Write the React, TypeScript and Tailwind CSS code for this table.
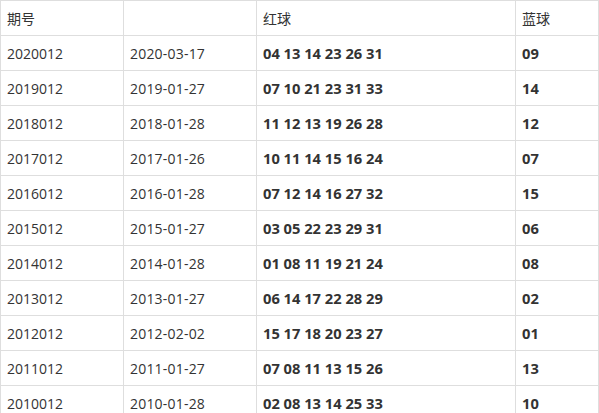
import React from "react";

const rows: [string, string, string, string][] = [
  ["2020012", "2020-03-17", "04 13 14 23 26 31", "09"],
  ["2019012", "2019-01-27", "07 10 21 23 31 33", "14"],
  ["2018012", "2018-01-28", "11 12 13 19 26 28", "12"],
  ["2017012", "2017-01-26", "10 11 14 15 16 24", "07"],
  ["2016012", "2016-01-28", "07 12 14 16 27 32", "15"],
  ["2015012", "2015-01-27", "03 05 22 23 29 31", "06"],
  ["2014012", "2014-01-28", "01 08 11 19 21 24", "08"],
  ["2013012", "2013-01-27", "06 14 17 22 28 29", "02"],
  ["2012012", "2012-02-02", "15 17 18 20 23 27", "01"],
  ["2011012", "2011-01-27", "07 08 11 13 15 26", "13"],
  ["2010012", "2010-01-28", "02 08 13 14 25 33", "10"],
];

const cell = "h-[35px] border-r border-b border-[#dedede] pl-[6px] flex items-center";

export default function App() {
  return (
    <div
      className="w-[599px] h-[413px] overflow-hidden bg-white text-[14px] text-[#333]"
      style={{ fontFamily: '"Open Sans", "Noto Sans CJK SC", sans-serif' }}
    >
      <div className="grid grid-cols-[123px_133px_259px_83px] border-l border-t border-[#dedede]">
        <div className={cell}>期号</div>
        <div className={cell}></div>
        <div className={cell}>红球</div>
        <div className={cell}>蓝球</div>
        {rows.map((r) => (
          <React.Fragment key={r[0]}>
            <div className={cell}>{r[0]}</div>
            <div className={cell + " tracking-[0.2px]"}>{r[1]}</div>
            <div className={cell + " font-bold text-[14.7px]"}>{r[2]}</div>
            <div className={cell + " font-bold text-[14.7px]"}>{r[3]}</div>
          </React.Fragment>
        ))}
      </div>
    </div>
  );
}
